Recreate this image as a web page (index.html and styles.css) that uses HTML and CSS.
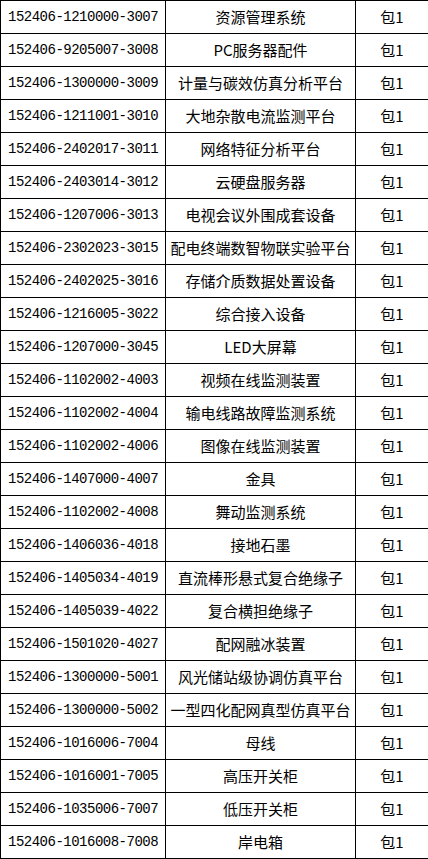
FILE: index.html
```html
<!DOCTYPE html>
<html lang="zh">
<head>
<meta charset="utf-8">
<link rel="stylesheet" href="styles.css">
</head>
<body>
<table class="list">
<tbody>
<tr><td class="code">152406-1210000-3007</td><td class="name">资源管理系统</td><td class="pkg">包1</td></tr>
<tr><td class="code">152406-9205007-3008</td><td class="name">PC服务器配件</td><td class="pkg">包1</td></tr>
<tr><td class="code">152406-1300000-3009</td><td class="name">计量与碳效仿真分析平台</td><td class="pkg">包1</td></tr>
<tr><td class="code">152406-1211001-3010</td><td class="name">大地杂散电流监测平台</td><td class="pkg">包1</td></tr>
<tr><td class="code">152406-2402017-3011</td><td class="name">网络特征分析平台</td><td class="pkg">包1</td></tr>
<tr><td class="code">152406-2403014-3012</td><td class="name">云硬盘服务器</td><td class="pkg">包1</td></tr>
<tr><td class="code">152406-1207006-3013</td><td class="name">电视会议外围成套设备</td><td class="pkg">包1</td></tr>
<tr><td class="code">152406-2302023-3015</td><td class="name">配电终端数智物联实验平台</td><td class="pkg">包1</td></tr>
<tr><td class="code">152406-2402025-3016</td><td class="name">存储介质数据处置设备</td><td class="pkg">包1</td></tr>
<tr><td class="code">152406-1216005-3022</td><td class="name">综合接入设备</td><td class="pkg">包1</td></tr>
<tr><td class="code">152406-1207000-3045</td><td class="name">LED大屏幕</td><td class="pkg">包1</td></tr>
<tr><td class="code">152406-1102002-4003</td><td class="name">视频在线监测装置</td><td class="pkg">包1</td></tr>
<tr><td class="code">152406-1102002-4004</td><td class="name">输电线路故障监测系统</td><td class="pkg">包1</td></tr>
<tr><td class="code">152406-1102002-4006</td><td class="name">图像在线监测装置</td><td class="pkg">包1</td></tr>
<tr><td class="code">152406-1407000-4007</td><td class="name">金具</td><td class="pkg">包1</td></tr>
<tr><td class="code">152406-1102002-4008</td><td class="name">舞动监测系统</td><td class="pkg">包1</td></tr>
<tr><td class="code">152406-1406036-4018</td><td class="name">接地石墨</td><td class="pkg">包1</td></tr>
<tr><td class="code">152406-1405034-4019</td><td class="name">直流棒形悬式复合绝缘子</td><td class="pkg">包1</td></tr>
<tr><td class="code">152406-1405039-4022</td><td class="name">复合横担绝缘子</td><td class="pkg">包1</td></tr>
<tr><td class="code">152406-1501020-4027</td><td class="name">配网融冰装置</td><td class="pkg">包1</td></tr>
<tr><td class="code">152406-1300000-5001</td><td class="name">风光储站级协调仿真平台</td><td class="pkg">包1</td></tr>
<tr><td class="code">152406-1300000-5002</td><td class="name">一型四化配网真型仿真平台</td><td class="pkg">包1</td></tr>
<tr><td class="code">152406-1016006-7004</td><td class="name">母线</td><td class="pkg">包1</td></tr>
<tr><td class="code">152406-1016001-7005</td><td class="name">高压开关柜</td><td class="pkg">包1</td></tr>
<tr><td class="code">152406-1035006-7007</td><td class="name">低压开关柜</td><td class="pkg">包1</td></tr>
<tr><td class="code">152406-1016008-7008</td><td class="name">岸电箱</td><td class="pkg">包1</td></tr>
</tbody>
</table>
</body>
</html>
```
FILE: styles.css
```css
html, body {
  margin: 0;
  padding: 0;
  background: #ffffff;
}
.list {
  border-collapse: collapse;
  table-layout: fixed;
  width: 428px;
  color: #000;
  font-family: "Noto Sans CJK SC", "Noto Sans", sans-serif;
  font-size: 15px;
}
.list td {
  border: 1px solid #000;
  height: 32px;
  padding: 0;
  box-sizing: border-box;
  white-space: nowrap;
  vertical-align: middle;
  line-height: 32px;
}
.list tr td {
  height: 33px;
}
.code {
  width: 165px;
  padding-left: 7px !important;
  font-family: "Liberation Mono", "DejaVu Sans Mono", monospace;
  font-size: 14px;
  letter-spacing: -0.5px;
}
.name {
  width: 190px;
  text-align: center;
}
.pkg {
  width: 73px;
  text-align: center;
}
```
